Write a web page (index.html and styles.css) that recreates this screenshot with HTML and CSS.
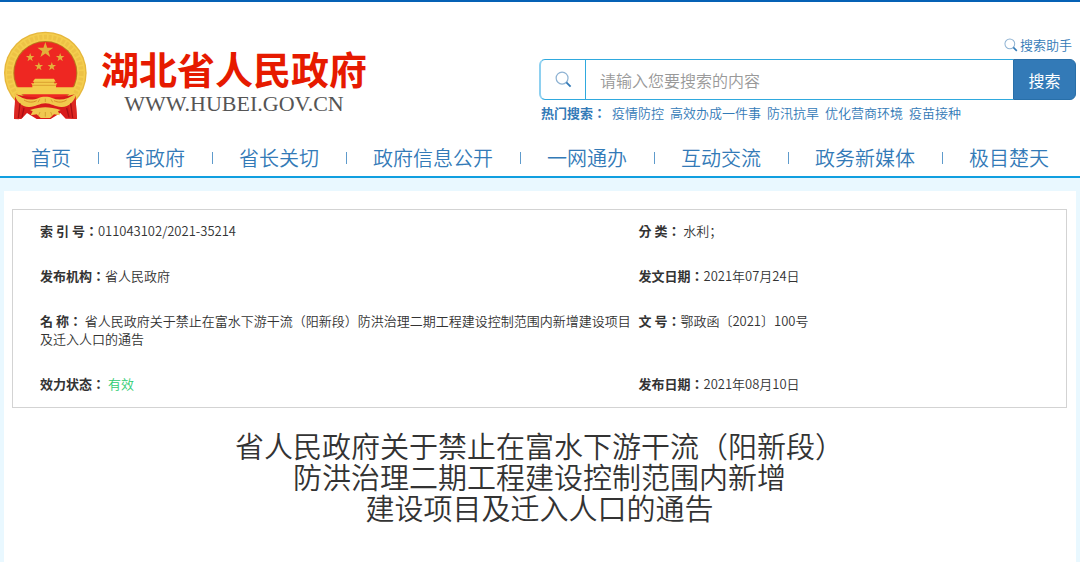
FILE: index.html
```html
<!DOCTYPE html>
<html lang="zh-CN">
<head>
<meta charset="utf-8">
<meta name="viewport" content="width=device-width, initial-scale=1">
<title>湖北省人民政府</title>
<link rel="stylesheet" href="styles.css">
</head>
<body>
<svg class="sprite" aria-hidden="true">
  <symbol id="magnifier" viewBox="0 0 18 18">
    <circle cx="7.5" cy="7.5" r="6.3" fill="none" stroke="#8fb3d3" stroke-width="1.3"/>
    <path d="M12 12l4.5 4.5" fill="none" stroke="#337ab7" stroke-width="2"/>
  </symbol>
  <symbol id="star" viewBox="-10 -10 20 20">
    <path d="M0-10 2.3-3.1H9.5L3.7 1.2 5.9 8.1 0 3.8-5.9 8.1-3.7 1.2-9.5-3.1H-2.3Z" fill="#e3b03a"/>
  </symbol>
</svg>
<header class="header">
  <div class="masthead">
    <a class="logo" href="#">
      <svg class="emblem" viewBox="12 33 249 267" role="img" aria-label="国徽">
        <circle cx="136" cy="159" r="124" fill="#e6b73c"/>
        <circle cx="136" cy="159" r="120" fill="#f4cd4e"/>
        <circle cx="136" cy="159" r="108" fill="none" stroke="#edc246" stroke-width="14" stroke-dasharray="9 5"/>
        <circle cx="136" cy="159" r="96" fill="#b9781c"/>
        <circle cx="136" cy="159" r="93" fill="#ee2722"/>
        <use href="#star" x="111" y="66" width="50" height="50"/>
        <use href="#star" x="77" y="99" width="27" height="27"/>
        <use href="#star" x="167" y="99" width="27" height="27"/>
        <use href="#star" x="103" y="126" width="27" height="27"/>
        <use href="#star" x="142" y="126" width="27" height="27"/>
        <path d="M105 176h57l5 9h-5v5h10l-4 5v7h55l-4 21H53l-4-21h48v-7l-4-5h9v-5h-4z" fill="#f4cc4c"/>
        <path d="M101 187h65M96 196h74" stroke="#d08c24" stroke-width="2"/>
        <path d="M46 223c28 8 55 7 76 12l14 9 14-9c21-5 48-4 76-12l5 74-34-1-16-17-29 18h-42l-29-18-17 18-22-1z" fill="#d81b1b"/>
        <path d="M47 224l-5 73 15 1 10-40zM226 224l5 73-16-1-9-38z" fill="#dc2822"/>
        <path d="M42 218c26 20 50 26 74 16 8-5 32-5 40 0 24 10 48 4 74-16-5 26-24 42-44 43-20 1-32-11-50-11s-30 12-50 11c-20-1-39-17-44-43z" fill="#f1c84c"/>
        <path d="M72 240c13 8 26 8 38 2M200 240c-13 8-26 8-38 2" stroke="#d88f28" stroke-width="3" fill="none"/>
        <path d="M90 270c18-5 32-8 46-8s28 3 46 8l-8 4 6 12-18-3-12 11h-28l-12-11-18 3 6-12z" fill="#f0c850"/>
        <path d="M60 250l-5 44M72 264l-6 28M212 250l6 44M200 264l7 28" stroke="#a90f14" stroke-width="4" fill="none"/>
        <path d="M120 276l-5 12M136 276v14M152 276l5 12M119 238l-5 9M136 236v10M153 238l5 9" stroke="#c98d24" stroke-width="2"/>
      </svg>
      <span class="brand">
        <span class="brand-name">湖北省人民政府</span>
        <span class="brand-url">WWW.HUBEI.GOV.CN</span>
      </span>
    </a>
    <div class="search">
      <a class="helper" href="#"><svg class="helper-icon"><use href="#magnifier"/></svg>搜索助手</a>
      <form class="search-form" role="search">
        <label class="search-label" for="q" aria-label="搜索"><svg class="search-icon"><use href="#magnifier"/></svg></label>
        <input class="search-input" id="q" type="text" placeholder="请输入您要搜索的内容">
        <button class="search-button" type="button">搜索</button>
      </form>
      <div class="hot">
        <strong class="hot-label">热门搜索：</strong>
        <a href="#">疫情防控</a>
        <a href="#">高效办成一件事</a>
        <a href="#">防汛抗旱</a>
        <a href="#">优化营商环境</a>
        <a href="#">疫苗接种</a>
      </div>
    </div>
  </div>
  <nav class="nav">
    <a href="#">首页</a><i class="sep"></i>
    <a href="#">省政府</a><i class="sep"></i>
    <a href="#">省长关切</a><i class="sep"></i>
    <a href="#">政府信息公开</a><i class="sep"></i>
    <a href="#">一网通办</a><i class="sep"></i>
    <a href="#">互动交流</a><i class="sep"></i>
    <a href="#">政务新媒体</a><i class="sep"></i>
    <a href="#">极目楚天</a>
  </nav>
</header>
<main class="panel">
  <dl class="meta">
    <div><dt>索 引 号：</dt><dd>011043102/2021-35214</dd></div>
    <div><dt>分 类：</dt> <dd>水利；</dd></div>
    <div><dt>发布机构：</dt><dd>省人民政府</dd></div>
    <div><dt>发文日期：</dt><dd>2021年07月24日</dd></div>
    <div><dt>名 称：</dt> <dd>省人民政府关于禁止在富水下游干流（阳新段）防洪治理二期工程建设控制范围内新增建设项目及迁入人口的通告</dd></div>
    <div><dt>文 号：</dt><dd>鄂政函〔2021〕100号</dd></div>
    <div><dt>效力状态：</dt> <dd class="valid">有效</dd></div>
    <div><dt>发布日期：</dt><dd>2021年08月10日</dd></div>
  </dl>
  <h1 class="title">省人民政府关于禁止在富水下游干流（阳新段）<br>防洪治理二期工程建设控制范围内新增<br>建设项目及迁入人口的通告</h1>
</main>
</body>
</html>
```
FILE: styles.css
```css
* { box-sizing: border-box; }

body {
  margin: 0;
  min-height: 100vh;
  display: flex;
  flex-direction: column;
  background: #e9f8ff;
  color: #333;
  font: 350 13px/18px "Noto Sans CJK SC", sans-serif;
}

a { color: #337ab7; text-decoration: none; }

.sprite { display: none; }

.header {
  background: #fff;
  border-top: 2px solid #0561b5;
  border-bottom: 2px solid #109fe0;
}

.masthead {
  display: flex;
  justify-content: space-between;
  gap: 24px;
  padding: 29px 4px 0;
}

.logo {
  display: flex;
  align-items: flex-start;
  gap: 14px;
}

.emblem { width: 83px; height: 89px; }

.brand {
  display: flex;
  flex-direction: column;
  align-items: center;
  padding-top: 14px;
}

.brand-name {
  color: #e61a00;
  font-size: 38px;
  font-weight: 700;
  line-height: 46px;
  white-space: nowrap;
}

.brand-url {
  color: #555;
  font: 22px/26px "Liberation Serif", serif;
}

.search {
  flex: 0 1 537px;
  display: flex;
  flex-direction: column;
  padding-top: 5px;
}

.helper {
  display: flex;
  align-items: center;
  align-self: flex-end;
  gap: 2px;
  padding-right: 4px;
}

.helper-icon { width: 14px; height: 14px; }

.search-form {
  display: flex;
  height: 41px;
  margin-top: 5px;
}

.search-label {
  flex: none;
  display: grid;
  place-items: center;
  width: 46px;
  border: 1px solid #2fa9de;
  border-right: 0;
  border-left: 2px solid #8ed0f0;
  border-radius: 6px 0 0 6px;
}

.search-icon { width: 17px; height: 17px; }

.search-input {
  flex: 1;
  min-width: 0;
  padding: 0 14px;
  border: 1px solid #2fa9de;
  border-right: 0;
  border-radius: 0;
  color: #333;
  font: 350 16px/24px "Noto Sans CJK SC", sans-serif;
}

.search-input::placeholder { color: #999; }

.search-button {
  flex: none;
  width: 63px;
  padding: 0;
  border: 1px solid #286fa9;
  border-radius: 0 6px 6px 0;
  background: #337ab7;
  color: #fff;
  font: 16px/24px "Noto Sans CJK SC", sans-serif;
}

.hot {
  display: flex;
  gap: 6px;
  padding: 4px 2px 0;
  white-space: nowrap;
}

.hot-label { color: #337ab7; }

/* Centred full-width punctuation in the labels */
.hot-label, .meta dt {
  font-family: "Noto Sans CJK TC", sans-serif;
  font-feature-settings: "locl" 0;
}

.nav {
  display: flex;
  align-items: center;
  justify-content: space-between;
  padding: 21px 31px 3px;
  font-size: 20px;
  line-height: 30px;
  white-space: nowrap;
}

.sep {
  width: 1px;
  height: 12px;
  background: #5f9bcc;
}

.panel {
  flex: 1;
  margin: 13px 4px 0;
  padding: 18px 9px 32px 8px;
  background: #fff;
}

.meta {
  display: grid;
  grid-template-columns: 7fr 5fr;
  row-gap: 27px;
  margin: 0;
  padding: 12px 0 14px 27px;
  border: 1px solid #d3d3d3;
}

.meta dt, .meta dd {
  display: inline;
  margin: 0;
}

.meta dt { font-weight: 700; }

.meta .valid { color: #2ecc71; }

.title {
  margin: 22px 0 0;
  text-align: center;
  font-size: 29px;
  font-weight: 350;
  line-height: 31px;
}
```
